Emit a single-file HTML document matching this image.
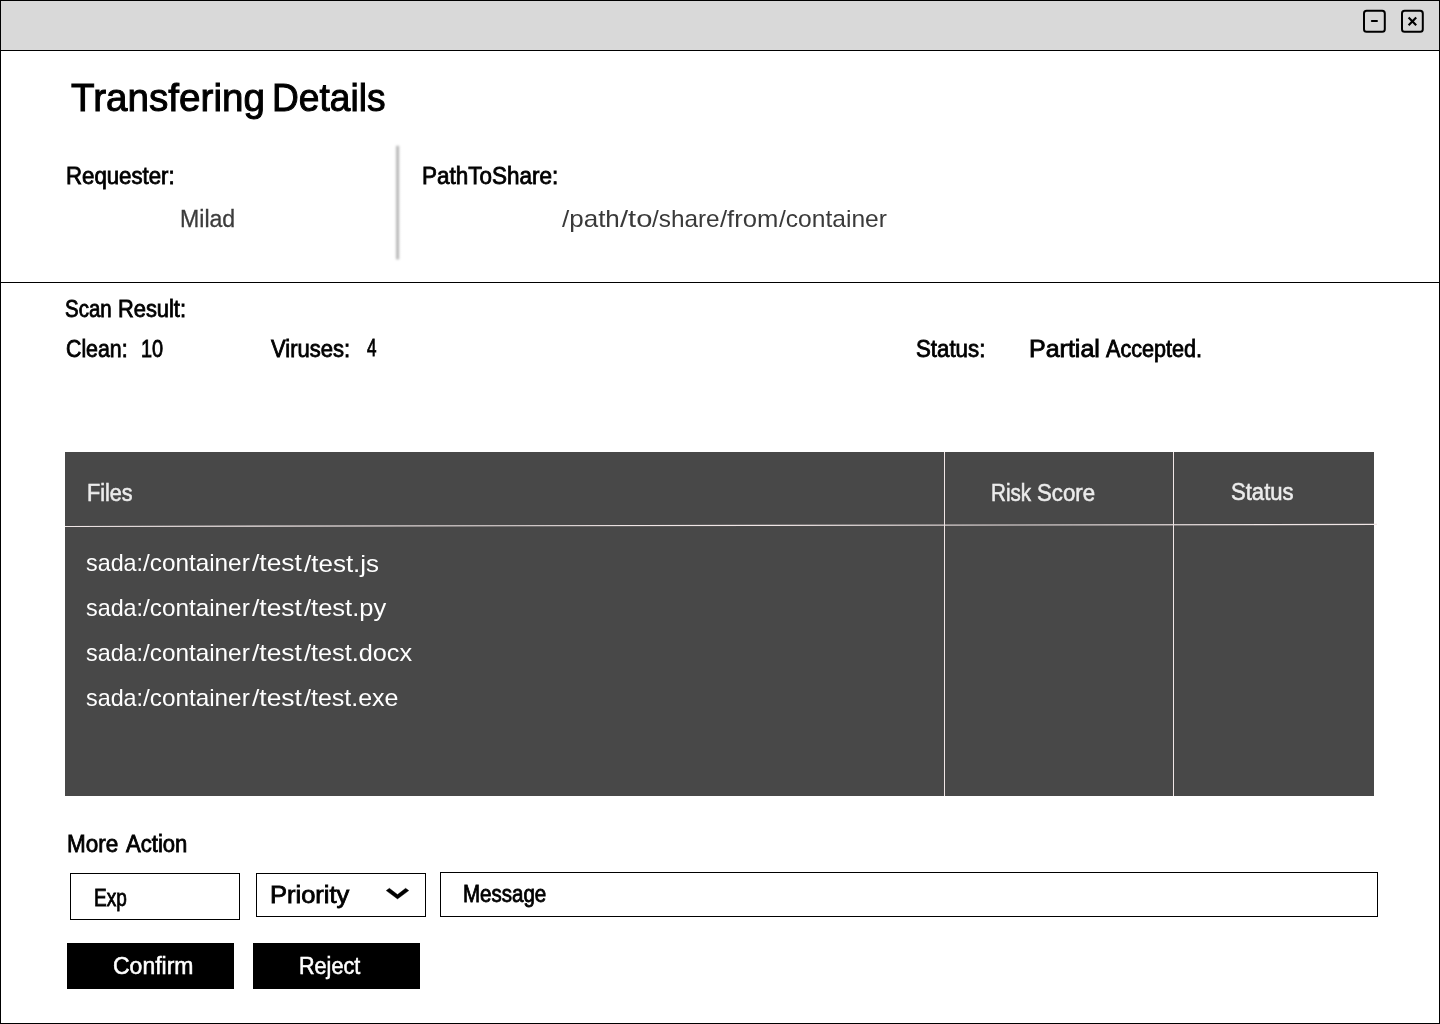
<!DOCTYPE html>
<html lang="en">
<head>
<meta charset="utf-8">
<title>Transfering Details</title>
<style>
html,body{margin:0;padding:0;background:#fff}
body{width:1440px;height:1024px;position:relative;overflow:hidden;font-family:"Liberation Sans",sans-serif}
.win{position:absolute;left:0;top:0;width:1438px;height:1022px;border:1px solid #000;background:#fff}
.bar{position:absolute;left:1px;top:1px;width:1438px;height:49px;background:#d9d9d9;border-bottom:1px solid #000}
.hr{position:absolute;left:1px;top:282px;width:1438px;height:1px;background:#000}
.tbl{position:absolute;left:65px;top:452px;width:1309px;height:344px;background:#484848}
.vl{position:absolute;top:452px;width:1px;height:344px;background:#f0e6e6}
.box{position:absolute;box-sizing:border-box;border:1px solid #000;background:#fff}
.btn{position:absolute;background:#000}
.txt{position:absolute;left:0;top:0;width:1440px;height:1024px;will-change:transform}
.t{position:absolute;white-space:nowrap;transform-origin:0 0;font-weight:400}
.h{-webkit-text-stroke:1px currentColor}
.d{-webkit-text-stroke:0.8px currentColor}
.w{-webkit-text-stroke:0.55px currentColor}
.l{-webkit-text-stroke:0.3px currentColor}
svg{position:absolute;left:0;top:0;overflow:visible}
</style>
</head>
<body>
<div class="win"></div>
<header class="bar"></header>
<div class="hr"></div>
<div class="tbl" role="table"></div>
<div class="vl" style="left:944px"></div>
<div class="vl" style="left:1173px"></div>
<div class="box" style="left:70px;top:873px;width:170px;height:47px"></div>
<div class="box" style="left:256px;top:873px;width:170px;height:44px"></div>
<div class="box" style="left:440px;top:872px;width:938px;height:45px"></div>
<div class="btn" role="button" style="left:67px;top:943px;width:167px;height:46px"></div>
<div class="btn" role="button" style="left:253px;top:943px;width:167px;height:46px"></div>
<svg width="1440" height="1024" viewBox="0 0 1440 1024" fill="none">
<defs><linearGradient id="vg" gradientUnits="userSpaceOnUse" x1="392.6" y1="0" x2="402.6" y2="0"><stop offset="0.00" stop-color="#000" stop-opacity="0.001"/><stop offset="0.05" stop-color="#000" stop-opacity="0.002"/><stop offset="0.10" stop-color="#000" stop-opacity="0.005"/><stop offset="0.15" stop-color="#000" stop-opacity="0.014"/><stop offset="0.20" stop-color="#000" stop-opacity="0.031"/><stop offset="0.25" stop-color="#000" stop-opacity="0.059"/><stop offset="0.30" stop-color="#000" stop-opacity="0.098"/><stop offset="0.35" stop-color="#000" stop-opacity="0.143"/><stop offset="0.40" stop-color="#000" stop-opacity="0.187"/><stop offset="0.45" stop-color="#000" stop-opacity="0.218"/><stop offset="0.50" stop-color="#000" stop-opacity="0.229"/><stop offset="0.55" stop-color="#000" stop-opacity="0.218"/><stop offset="0.60" stop-color="#000" stop-opacity="0.187"/><stop offset="0.65" stop-color="#000" stop-opacity="0.143"/><stop offset="0.70" stop-color="#000" stop-opacity="0.098"/><stop offset="0.75" stop-color="#000" stop-opacity="0.059"/><stop offset="0.80" stop-color="#000" stop-opacity="0.031"/><stop offset="0.85" stop-color="#000" stop-opacity="0.014"/><stop offset="0.90" stop-color="#000" stop-opacity="0.005"/><stop offset="0.95" stop-color="#000" stop-opacity="0.002"/><stop offset="1.00" stop-color="#000" stop-opacity="0.001"/></linearGradient></defs>
<g id="vdiv"><rect x="392.6" y="148" width="10.0" height="109" fill="url(#vg)"/><rect x="392.6" y="143" width="10.0" height="1" fill="url(#vg)" opacity="0.03"/><rect x="392.6" y="144" width="10.0" height="1" fill="url(#vg)" opacity="0.14"/><rect x="392.6" y="145" width="10.0" height="1" fill="url(#vg)" opacity="0.40"/><rect x="392.6" y="146" width="10.0" height="1" fill="url(#vg)" opacity="0.72"/><rect x="392.6" y="147" width="10.0" height="1" fill="url(#vg)" opacity="0.92"/><rect x="392.6" y="257" width="10.0" height="1" fill="url(#vg)" opacity="0.94"/><rect x="392.6" y="258" width="10.0" height="1" fill="url(#vg)" opacity="0.77"/><rect x="392.6" y="259" width="10.0" height="1" fill="url(#vg)" opacity="0.47"/><rect x="392.6" y="260" width="10.0" height="1" fill="url(#vg)" opacity="0.18"/><rect x="392.6" y="261" width="10.0" height="1" fill="url(#vg)" opacity="0.04"/></g>
<line x1="65" y1="526.45" x2="1377" y2="524.4" stroke="#f0e6e6" stroke-width="1.15"/>
<rect x="1364" y="10.85" width="20.8" height="20.95" rx="2.6" stroke="#000" stroke-width="2"/>
<line x1="1371.9" y1="21" x2="1376.9" y2="21" stroke="#000" stroke-width="2.2" stroke-linecap="round"/>
<rect x="1402" y="10.85" width="20.8" height="20.95" rx="2.6" stroke="#000" stroke-width="2"/>
<path d="M1408.6 17.6 L1416.2 25.2 M1416.2 17.6 L1408.6 25.2" stroke="#000" stroke-width="2.15"/>
<polygon points="386.2,890.6 389.4,888.3 397.5,894.6 405.6,888.3 408.8,890.6 397.5,898.9" fill="#000" stroke="#000" stroke-width="0.4" stroke-linejoin="round"/>
</svg>
<main class="txt">
<span class="t h" id="title1" style="left:71.04px;top:78.03px;font-size:39.24px;line-height:39.24px;color:#000;transform:scaleX(0.9848)">Transfering</span>
<span class="t h" id="title2" style="left:271.98px;top:78.04px;font-size:39.24px;line-height:39.24px;color:#000;transform:scaleX(0.9462)">Details</span>
<span class="t d" id="req" style="left:65.95px;top:164.97px;font-size:23.18px;line-height:23.18px;color:#000;transform:scaleX(0.9582)">Requester:</span>
<span class="t l" id="milad" style="left:179.99px;top:206.95px;font-size:23.98px;line-height:23.98px;color:#3c3c3c;transform:scaleX(0.9642)">Milad</span>
<span class="t d" id="pts" style="left:422.45px;top:165.01px;font-size:23.18px;line-height:23.18px;color:#000;transform:scaleX(0.9695)">PathToShare:</span>
<span class="t r" id="p0" style="left:561.95px;top:207.03px;font-size:24.00px;line-height:24.00px;color:#3a3a3a;transform:scaleX(1.0830)">/path</span>
<span class="t r" id="p1" style="left:619.95px;top:207.03px;font-size:24.00px;line-height:24.00px;color:#3a3a3a;transform:scaleX(1.2136)">/to</span>
<span class="t r" id="p2" style="left:651.95px;top:207.03px;font-size:24.00px;line-height:24.00px;color:#3a3a3a;transform:scaleX(1.0136)">/share</span>
<span class="t r" id="p3" style="left:719.95px;top:207.03px;font-size:24.00px;line-height:24.00px;color:#3a3a3a;transform:scaleX(1.0674)">/from</span>
<span class="t r" id="p4" style="left:779.04px;top:207.03px;font-size:24.00px;line-height:24.00px;color:#3a3a3a;transform:scaleX(1.0242)">/container</span>
<span class="t d" id="scan1" style="left:64.98px;top:298.01px;font-size:23.18px;line-height:23.18px;color:#000;transform:scaleX(0.8834)">Scan</span>
<span class="t d" id="scan2" style="left:118.27px;top:298.02px;font-size:23.18px;line-height:23.18px;color:#000;transform:scaleX(0.9429)">Result:</span>
<span class="t d" id="clean" style="left:66.02px;top:338.03px;font-size:23.18px;line-height:23.18px;color:#000;transform:scaleX(0.9193)">Clean:</span>
<span class="t d" id="n10" style="left:140.96px;top:338.03px;font-size:23.18px;line-height:23.18px;color:#000;transform:scaleX(0.8580)">10</span>
<span class="t d" id="vir" style="left:271.03px;top:337.95px;font-size:23.18px;line-height:23.18px;color:#000;transform:scaleX(0.9495)">Viruses:</span>
<span class="t d" id="n4" style="left:367.03px;top:336.97px;font-size:23.18px;line-height:23.18px;color:#000;transform:scaleX(0.7370)">4</span>
<span class="t d" id="stat" style="left:916.03px;top:338.01px;font-size:23.18px;line-height:23.18px;color:#000;transform:scaleX(0.9612)">Status:</span>
<span class="t d" id="part" style="left:1028.96px;top:338.00px;font-size:23.18px;line-height:23.18px;color:#000;transform:scaleX(1.0788)">Partial</span>
<span class="t d" id="acc" style="left:1105.79px;top:338.04px;font-size:23.18px;line-height:23.18px;color:#000;transform:scaleX(0.9326)">Accepted.</span>
<span class="t w" id="files" style="left:86.75px;top:481.97px;font-size:23.55px;line-height:23.55px;color:#ececec;transform:scaleX(0.9189)">Files</span>
<span class="t w" id="risk" style="left:990.99px;top:482.01px;font-size:23.55px;line-height:23.55px;color:#ececec;transform:scaleX(0.8753)">Risk</span>
<span class="t w" id="score" style="left:1037.02px;top:482.00px;font-size:23.55px;line-height:23.55px;color:#ececec;transform:scaleX(0.9436)">Score</span>
<span class="t w" id="tstat" style="left:1230.95px;top:481.04px;font-size:23.55px;line-height:23.55px;color:#ececec;transform:scaleX(0.9379)">Status</span>
<span class="t r" id="f1a" style="left:86.01px;top:551.03px;font-size:24.00px;line-height:24.00px;color:#fff;transform:scaleX(0.9722)">sada:</span>
<span class="t r" id="f1b" style="left:142.77px;top:551.03px;font-size:24.00px;line-height:24.00px;color:#fff;transform:scaleX(1.0126)">/container</span>
<span class="t r" id="f1c" style="left:252.04px;top:551.03px;font-size:24.00px;line-height:24.00px;color:#fff;transform:scaleX(1.0984)">/test</span>
<span class="t r" id="f1d" style="left:304.04px;top:552.03px;font-size:24.00px;line-height:24.00px;color:#fff;transform:scaleX(1.0829)">/test.js</span>
<span class="t r" id="f2a" style="left:86.01px;top:596.03px;font-size:24.00px;line-height:24.00px;color:#fff;transform:scaleX(0.9722)">sada:</span>
<span class="t r" id="f2b" style="left:142.77px;top:596.03px;font-size:24.00px;line-height:24.00px;color:#fff;transform:scaleX(1.0126)">/container</span>
<span class="t r" id="f2c" style="left:252.04px;top:596.03px;font-size:24.00px;line-height:24.00px;color:#fff;transform:scaleX(1.0984)">/test</span>
<span class="t r" id="f2d" style="left:303.95px;top:596.04px;font-size:24.00px;line-height:24.00px;color:#fff;transform:scaleX(1.0624)">/test.py</span>
<span class="t r" id="f3a" style="left:86.01px;top:641.03px;font-size:24.00px;line-height:24.00px;color:#fff;transform:scaleX(0.9722)">sada:</span>
<span class="t r" id="f3b" style="left:142.77px;top:641.03px;font-size:24.00px;line-height:24.00px;color:#fff;transform:scaleX(1.0126)">/container</span>
<span class="t r" id="f3c" style="left:252.04px;top:641.03px;font-size:24.00px;line-height:24.00px;color:#fff;transform:scaleX(1.0984)">/test</span>
<span class="t r" id="f3d" style="left:303.95px;top:641.03px;font-size:24.00px;line-height:24.00px;color:#fff;transform:scaleX(1.0523)">/test.docx</span>
<span class="t r" id="f4a" style="left:86.01px;top:686.03px;font-size:24.00px;line-height:24.00px;color:#fff;transform:scaleX(0.9722)">sada:</span>
<span class="t r" id="f4b" style="left:142.77px;top:686.03px;font-size:24.00px;line-height:24.00px;color:#fff;transform:scaleX(1.0126)">/container</span>
<span class="t r" id="f4c" style="left:252.04px;top:686.03px;font-size:24.00px;line-height:24.00px;color:#fff;transform:scaleX(1.0984)">/test</span>
<span class="t r" id="f4d" style="left:303.95px;top:686.03px;font-size:24.00px;line-height:24.00px;color:#fff;transform:scaleX(1.0406)">/test.exe</span>
<span class="t d" id="more1" style="left:66.99px;top:833.04px;font-size:23.18px;line-height:23.18px;color:#000;transform:scaleX(0.9696)">More</span>
<span class="t d" id="more2" style="left:125.95px;top:833.00px;font-size:23.18px;line-height:23.18px;color:#000;transform:scaleX(0.9532)">Action</span>
<span class="t d" id="exp" style="left:94.02px;top:886.99px;font-size:23.18px;line-height:23.18px;color:#000;transform:scaleX(0.8209)">Exp</span>
<span class="t d" id="prio" style="left:269.79px;top:884.00px;font-size:23.18px;line-height:23.18px;color:#000;transform:scaleX(1.1007)">Priority</span>
<span class="t d" id="msg" style="left:462.96px;top:882.97px;font-size:23.18px;line-height:23.18px;color:#000;transform:scaleX(0.8855)">Message</span>
<span class="t w" id="conf" style="left:112.98px;top:954.96px;font-size:23.55px;line-height:23.55px;color:#fff;transform:scaleX(0.9760)">Confirm</span>
<span class="t w" id="rej" style="left:298.97px;top:955.03px;font-size:23.55px;line-height:23.55px;color:#fff;transform:scaleX(0.9172)">Reject</span>
</main>
</body>
</html>
